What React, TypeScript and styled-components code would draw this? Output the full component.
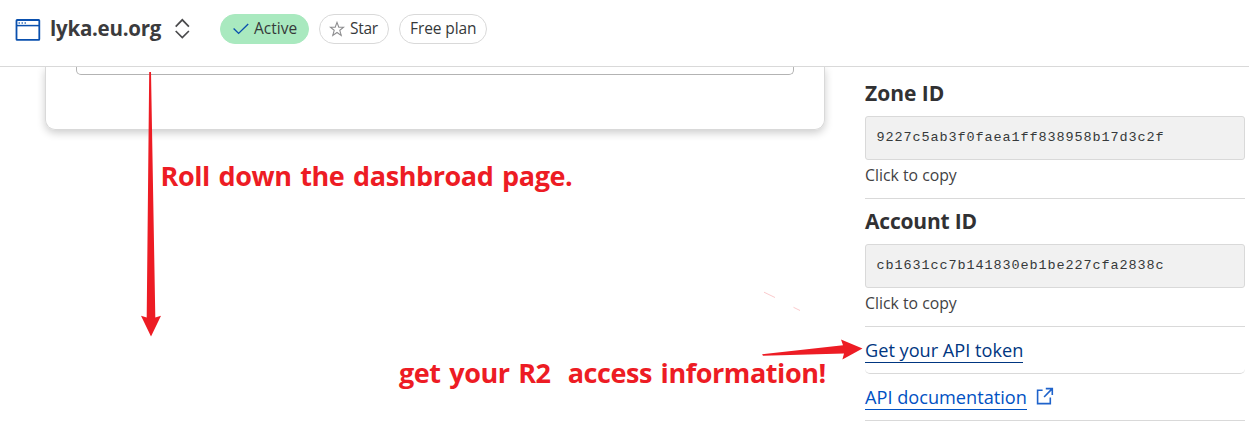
import React from "react";
import styled, { createGlobalStyle } from "styled-components";

const GlobalStyle = createGlobalStyle`
  * { box-sizing: border-box; }
  body {
    margin: 0;
    background: #fff;
    color: #36393a;
    font-family: "Open Sans", "Noto Sans", sans-serif;
    overflow: hidden;
  }
`;

const Page = styled.div`
  position: relative;
  height: 432px;
  display: flex;
  flex-direction: column;
  overflow: hidden;
`;

const Header = styled.header`
  flex: none;
  height: 67px;
  padding: 14px 15px 0;
  display: flex;
  align-items: flex-start;
  border-bottom: 1px solid #d9d9d9;
  background: #fff;
`;

const ZoneSwitcher = styled.div`
  width: 205px;
  height: 30px;
  display: flex;
  align-items: center;
`;

const ZoneName = styled.h1`
  margin: 0 0 0 9px;
  width: 124px;
  height: 30px;
  font-size: 20.5px;
  font-weight: 700;
  letter-spacing: -0.25px;
  line-height: 28px;
  white-space: nowrap;
  color: #3b3b3d;
`;

const Pills = styled.div`
  display: flex;
  gap: 10px;
`;

const Pill = styled.span<{ $width: number; $active?: boolean; $inset?: number; $spacing?: number }>`
  width: ${(p) => p.$width}px;
  height: 30px;
  display: flex;
  align-items: center;
  padding-left: ${(p) => p.$inset ?? 9}px;
  gap: 5px;
  border-radius: 15px;
  border: 1px solid ${(p) => (p.$active ? "#a9e9bf" : "#d9d9d9")};
  background: ${(p) => (p.$active ? "#a9e9bf" : "#fff")};
  font-size: 15.5px;
  letter-spacing: ${(p) => p.$spacing ?? 0}px;
  line-height: 26px;
  white-space: nowrap;
  color: #36393a;
`;

const PillLabel = styled.span`
  height: 28px;
`;

const Main = styled.main`
  flex: 1;
  min-height: 0;
  display: flex;
  justify-content: space-between;
  padding: 0 4px 0 45px;
  overflow: hidden;
`;

const Card = styled.section`
  width: 780px;
  height: 63px;
  padding: 0 30px 0 31px;
  border: 1px solid #d9d9d9;
  border-top: 0;
  border-radius: 0 0 10px 10px;
  box-shadow: 0 3px 9px rgba(0, 0, 0, 0.2);
`;

const CardField = styled.div`
  height: 8px;
  margin-left: -1px;
  border: 1px solid #b3b3b3;
  border-top: 0;
  border-radius: 0 0 5px 5px;
`;

const Sidebar = styled.aside`
  width: 380px;
`;

const IdSection = styled.section<{ $top: number }>`
  padding: ${(p) => p.$top}px 0 0;
  height: ${(p) => 124 + p.$top}px;
  border-bottom: 1px solid #d9d9d9;
`;

const IdTitle = styled.h2<{ $spacing?: number }>`
  margin: 0;
  height: 41px;
  font-size: 21px;
  font-weight: 700;
  line-height: 36px;
  letter-spacing: ${(p) => p.$spacing ?? 0}px;
  color: #313133;
`;

const IdBox = styled.code`
  display: block;
  height: 44px;
  padding-left: 10.5px;
  border: 1px solid #d9d9d9;
  border-radius: 3px;
  background: #f1f1f1;
  color: #36393a;
  font-family: "Liberation Mono", monospace;
  font-size: 13.5px;
  letter-spacing: 0.9px;
  line-height: 41px;
`;

const CopyHint = styled.div`
  font-size: 15.8px;
  line-height: 30px;
  color: #424244;
`;

const LinkRow = styled.div<{ $curved?: boolean }>`
  height: 47px;
  padding-top: 12px;
  display: flex;
  align-items: flex-start;
  gap: 9px;
  border-bottom: 1px solid #d9d9d9;
  border-radius: ${(p) => (p.$curved ? "0 0 5px 5px" : "0")};
`;

const Link = styled.a<{ $visited?: boolean }>`
  height: 24px;
  font-size: 18.17px;
  line-height: 23px;
  white-space: nowrap;
  color: ${(p) => (p.$visited ? "#003681" : "#0051c3")};
  border-bottom: 1px solid currentColor;
`;

const Annotations = styled.svg`
  position: absolute;
  inset: 0;
  pointer-events: none;
`;

const Note = styled.div<{ $x: number; $y: number; $spacing?: number }>`
  position: absolute;
  left: ${(p) => p.$x}px;
  top: ${(p) => p.$y}px;
  font-size: 27px;
  font-weight: 700;
  line-height: 36px;
  letter-spacing: ${(p) => p.$spacing ?? 0}px;
  word-spacing: 2px;
  white-space: pre;
  color: #ed1c24;
`;

const WindowIcon = () => (
  <svg width="26" height="30" viewBox="15 14 26 30" fill="none" stroke="#0a50ae">
    <rect x="16.5" y="20" width="22.8" height="19.8" rx="0.6" strokeWidth="1.8" />
    <path d="M17 25.6H39" strokeWidth="1.5" />
    <path d="M18.6 23h1.2M21.6 23h1.2M24.6 23h1.2" strokeWidth="1.3" />
  </svg>
);

const SortIcon = () => (
  <svg width="16" height="30" viewBox="174 14 16 30" fill="none" stroke="#4a4a4c" strokeWidth="1.7">
    <path d="M175.7 26.6 182.3 19.8 188.9 26.6M175.7 31 182.3 37.5 188.9 31" />
  </svg>
);

const CheckIcon = () => (
  <svg width="16" height="12" viewBox="0 0 16 12" fill="none" stroke="#0a50ae" strokeWidth="1.4">
    <path d="M0.6 5.6 5.6 10.4 15.2 1" />
  </svg>
);

const StarIcon = () => (
  <svg width="16" height="16" viewBox="0 0 16 16" fill="none" stroke="#8d8d8f" strokeWidth="1.1">
    <path d="M8 1.4 9.8 6.2H14.7L10.8 9.3 12.2 14.4 8 11.5 3.8 14.4 5.2 9.3 1.3 6.2H6.2Z" />
  </svg>
);

const ExternalIcon = () => (
  <svg width="18" height="20" viewBox="0 0 18 20" fill="none" stroke="#1f63cb" strokeWidth="1.6">
    <path d="M6.6 4.2H1.6V17.6H14.3V11.4M9.8 2.6H16.3V9M16 2.9 8.1 11" />
  </svg>
);

export default function App() {
  return (
    <Page>
      <GlobalStyle />
      <Header>
        <ZoneSwitcher>
          <WindowIcon />
          <ZoneName>lyka.eu.org</ZoneName>
          <SortIcon />
        </ZoneSwitcher>
        <Pills>
          <Pill $width={89} $active $inset={12}>
            <CheckIcon />
            <PillLabel>Active</PillLabel>
          </Pill>
          <Pill $width={70} $inset={9} $spacing={-0.3}>
            <StarIcon />
            <PillLabel>Star</PillLabel>
          </Pill>
          <Pill $width={88} $inset={10} $spacing={-0.1}>
            <PillLabel>Free plan</PillLabel>
          </Pill>
        </Pills>
      </Header>
      <Main>
        <Card>
          <CardField />
        </Card>
        <Sidebar>
          <IdSection $top={8}>
            <IdTitle>Zone ID</IdTitle>
            <IdBox>9227c5ab3f0faea1ff838958b17d3c2f</IdBox>
            <CopyHint>Click to copy</CopyHint>
          </IdSection>
          <IdSection $top={4}>
            <IdTitle $spacing={-0.2}>Account ID</IdTitle>
            <IdBox>cb1631cc7b141830eb1be227cfa2838c</IdBox>
            <CopyHint>Click to copy</CopyHint>
          </IdSection>
          <LinkRow $curved>
            <Link $visited>Get your API token</Link>
          </LinkRow>
          <LinkRow>
            <Link>API documentation</Link>
            <ExternalIcon />
          </LinkRow>
        </Sidebar>
      </Main>
      <Annotations width="1249" height="432" viewBox="0 0 1249 432" fill="#ed1c24">
        <path d="M149.2 72H151L155.3 317.5 161 315.8 151 336.5 141 315.8 146.7 317.5Z" />
        <path d="M762 354.2 843 345.2 841 339.4 862.5 348.5 842.4 359.4 844 353.6 763 355.8Z" />
        <path d="M764 292.2 775 297.5M793.5 307.3 800 310.5" fill="none" stroke="#f7a6aa" strokeWidth="0.6" />
      </Annotations>
      <Note $x={160.5} $y={158} $spacing={-0.4}>Roll down the dashbroad page.</Note>
      <Note $x={399} $y={355} $spacing={-0.43}>{"get your R2  access information!"}</Note>
    </Page>
  );
}
